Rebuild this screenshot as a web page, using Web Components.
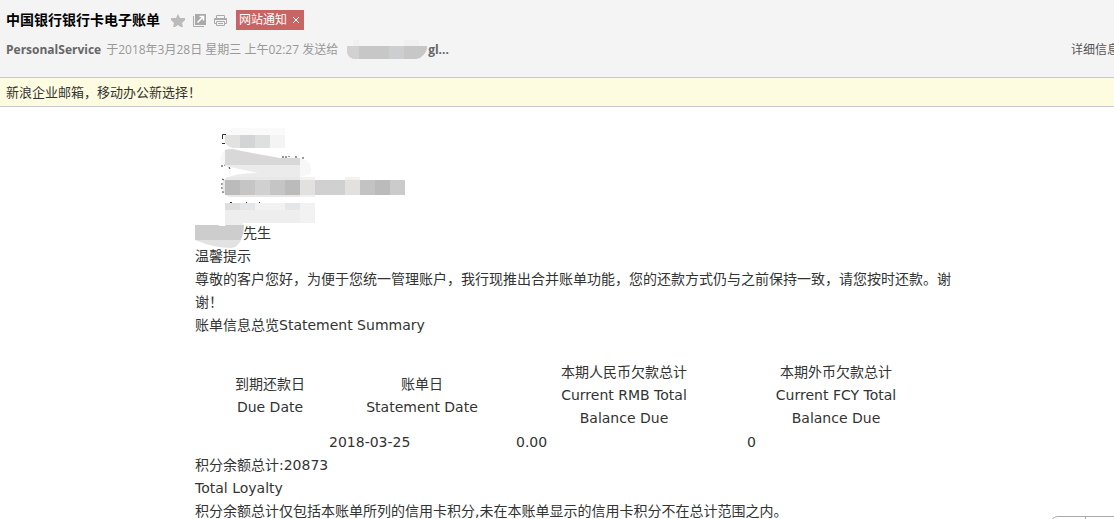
<!DOCTYPE html>
<html lang="zh-CN">
<head>
<meta charset="utf-8">
<meta name="viewport" content="width=device-width, initial-scale=1">
<title>中国银行银行卡电子账单</title>
<style>
html { overflow: hidden; background: #fff; }
body { margin: 0; font: 12px/18px "Open Sans", "Noto Sans CJK SC", sans-serif; color: #333; }
</style>
</head>
<body>
<mail-view>
  <mail-header slot="header" sender="PersonalService" sent="于2018年3月28日 星期三 上午02:27 发送给">
    中国银行银行卡电子账单
    <mail-tag slot="tag">网站通知</mail-tag>
  </mail-header>
  <notice-bar slot="notice">新浪企业邮箱，移动办公新选择！</notice-bar>
  <bank-statement></bank-statement>
</mail-view>
<quick-reply></quick-reply>
<script>
function define(name, html) {
  const template = document.createElement('template');
  template.innerHTML = html;
  customElements.define(name, class extends HTMLElement {
    constructor() {
      super();
      this.attachShadow({ mode: 'open' }).append(template.content.cloneNode(true));
    }
    connectedCallback() {
      for (const el of this.shadowRoot.querySelectorAll('[data-from]'))
        el.textContent = this.getAttribute(el.dataset.from);
    }
  });
}

define('mail-view', `
<style>
:host { display: block; width: calc(100% + 36px); }
main { max-width: 760px; margin: 0 auto; padding-top: 21px; }
</style>
<slot name="header"></slot><slot name="notice"></slot><main><slot></slot></main>`);

define('mail-header', `
<style>
:host { display: block; background: #f4f4f4; border-bottom: 1px solid #c8c8d0; padding: 10px 31px 18px 6px; }
.row { display: flex; align-items: center; }
.title { height: 20px; }
h1 { margin: 0 11px 0 0; font-size: 14px; line-height: 20px; color: #000; white-space: nowrap; }
.tools { display: flex; gap: 6px; margin-right: 8px; }
button { border: 0; padding: 0; background: none; width: 15px; height: 15px; display: block; }
svg { display: block; }
.meta { margin-top: 11px; color: #999; white-space: pre; height: 18px; }
.meta svg { flex: none; }
b { color: #666; }
.meta a { margin-left: auto; color: #555; text-decoration: none; }
.sent { margin: 0 8px 0 5px; }
</style>
<div class="row title">
  <h1><slot></slot></h1>
  <div class="tools">
    <button aria-label="星标"><svg width="15" height="15"><path fill="#bbb" d="M7 1l2 4h5v2l-3 3 1 4H10l-3-2-3 2H2l1-4-3-3V5h5z"/></svg></button>
    <button aria-label="新窗口打开"><svg width="15" height="15" fill="none"><path fill="#aaa" d="M3 1h11v11H3z"/><path stroke="#aaa" d="M1.500 3v10.500H12"/><path stroke="#fff" stroke-width="1.500" d="M5.500 9.500l6-6M7.500 3.500h4v4"/></svg></button>
    <button aria-label="打印"><svg width="15" height="15" fill="none" stroke="#aaa"><path d="M3.500 5V2.500h8V5M3.500 10.500h-2v-5h12v5h-2M3.500 8.500h8v4h-8z"/><path stroke="#aaa" d="M2 6.500h11M5 10.500h5"/></svg></button>
  </div>
  <slot name="tag"></slot>
</div>
<div class="row meta"><b data-from="sender"></b><span class="sent" data-from="sent"></span><svg width="82" height="20" viewBox="347 39 82 20" aria-hidden="true"><path fill="#f0f0f0" d="M354 39h6v6h-6zM405 39h15v6h-15z"/><clipPath id="c"><path d="M348 45h80q1 6-7 12-2 1-6 1h-57q-10 0-10-9z"/></clipPath><g clip-path="url(#c)"><path fill="#c7c7c8" d="M347 45h82v14h-82z"/><path fill="#d1d1d1" d="M347 45h13v14h-13z"/><path fill="#ccced0" d="M390 45h15v14h-15z"/></g></svg><b>gl...</b><a href="#details">详细信息</a></div>`);

define('mail-tag', `
<style>
:host { display: flex; align-items: center; height: 20px; padding: 0 4px 0 3px; background: #c86464; color: #fff; }
button { border: 0; padding: 0; margin-left: 5px; background: none; width: 8px; height: 8px; }
svg { display: block; }
</style>
<slot></slot><button aria-label="移除标签"><svg width="8" height="8" stroke="#fff"><path d="M1 1l6 6M7 1L1 7"/></svg></button>`);

define('notice-bar', `
<style>
:host { display: block; background: #fefce0; border-bottom: 1px solid #c8c8d0; padding: 4px 6px; font-size: 13px; line-height: 20px; }
</style><slot></slot>`);

define('redacted-address', `
<style>:host { display: block; } svg { display: block; }</style>
<svg width="215" height="121" viewBox="195 128 215 121" aria-hidden="true">
<g fill="none" stroke="#333"><path d="M226 134.500h-3.500v4.500M222 143.500h3M222 167v-2M225 164v2M229 167l1 2M283 156v2M286 156v2M289 156v1M296 156v2M303 157v2M222 179l2 1M221 184h2M222 187v2M223 191v2M230 202.500h2M246 202.500h1M259 202.500h1"/></g>
<path fill="#fafafa" d="M232 128h53v7h-59q2-5 6-7z"/>
<path fill="#e2e3e1" d="M225 135h15v13h-8q-5-2-7-5z"/><path fill="#d2d4d6" d="M240 135h15v13h-15z"/><path fill="#dde0df" d="M255 135h15v13h-15z"/><path fill="#f4f4f4" d="M270 135h15v13h-15z"/>
<path fill="#f7f7f7" d="M225 150q-6 6-4 13l4 2zM300 158q14 3 10 16l-10 3z"/>
<path fill="#ebebeb" d="M225 165h75v12h-75q8-5 33-4-18-4-33-7z"/><path fill="#fff" d="M225 169q15 3 33 4-20 0-33 5z"/>
<path fill="#d8d8d8" d="M225 150q7-2 12 0l26 5 17 3h20v7h-75z"/>
<path fill="#e8e8e8" d="M227 177q-6 4-4 13 2 7 8 7h69v-20z"/>
<path fill="#f2f2f2" d="M300 177h15v20h-15zM345 177h15v3h-15z"/>
<path fill="#bbb" d="M225 180h15v15h-15zM285 180h15v15h-15zM375 180h15v15h-15z"/><path fill="#c5c5c5" d="M240 180h15v15h-15zM270 180h15v15h-15z"/><path fill="#cbcbcb" d="M390 180h15v15h-15z"/><path fill="#d0d0d1" d="M255 180h15v15h-15zM315 180h30v15h-30z"/><path fill="#e2e1e0" d="M300 180h15v15h-15zM345 180h15v15h-15z"/><path fill="#c3c3c3" d="M360 180h15v15h-15z"/>
<path fill="#dedede" d="M225 203h15v7h-15z"/><path fill="#e5e6e8" d="M240 203h15v7h-15zM285 203h15v7h-15z"/><path fill="#f2f2f2" d="M255 203h30v7h-30zM300 203h15v20h-15z"/><path fill="#eee" d="M225 210h75v13h-75z"/>
<path fill="#eee" d="M225 223h18v3h-18z"/><path fill="#cdcdcd" d="M195 225h23l2 1h5l1-1h18q0 8-3 15h-46z"/><path fill="#e2e2e2" d="M195 240h46q-3 7-10 8-17 0-36-8z"/>
</svg>`);

define('bank-statement', `
<style>
:host { display: block; font: 14px/23px "DejaVu Sans", "Noto Sans CJK SC", sans-serif; color: #333; }
.intro { display: flex; align-items: flex-end; height: 117px; }
redacted-address { align-self: flex-start; }
.intro span { margin-left: -167px; }
p { margin: 0; }
table { border-collapse: collapse; table-layout: fixed; width: 100%; }
.heads { margin-top: 24px; }
th, td { padding: 0; font-weight: normal; }
th { text-align: center; vertical-align: middle; }
td { text-align: left; height: 24px; }
</style>
<div class="intro"><redacted-address></redacted-address><span>先生</span></div>
<p>温馨提示</p>
<p>尊敬的客户您好，为便于您统一管理账户，我行现推出合并账单功能，您的还款方式仍与之前保持一致，请您按时还款。谢谢！</p>
<p>账单信息总览Statement Summary</p>
<table class="heads"><colgroup><col width="150"><col width="154"><col width="250"><col width="174"><col></colgroup>
<tr><th>到期还款日<br>Due Date</th><th>账单日<br>Statement Date</th><th>本期人民币欠款总计<br>Current RMB Total<br>Balance Due</th><th>本期外币欠款总计<br>Current FCY Total<br>Balance Due</th><th></th></tr></table>
<table><colgroup><col width="134"><col width="187"><col width="231"><col></colgroup>
<tr><td></td><td>2018-03-25</td><td>0.00</td><td>0</td></tr></table>
<p>积分余额总计:20873</p>
<p>Total Loyalty</p>
<p>积分余额总计仅包括本账单所列的信用卡积分,未在本账单显示的信用卡积分不在总计范围之内。</p>`);

define('quick-reply', `
<style>
:host { position: fixed; right: -36px; bottom: -25px; width: 100px; height: 28px; box-sizing: border-box; display: flex; border: 1px solid #aaa; border-radius: 8px 8px 0 0; background: #fff; }
i { width: 34px; border-right: 1px solid #aaa; }
</style><i></i>`);
</script>
</body>
</html>
